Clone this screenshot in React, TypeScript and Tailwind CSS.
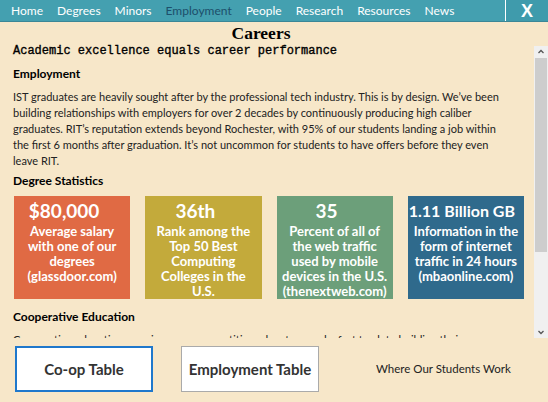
import React from "react";

const navItems = ["Home", "Degrees", "Minors", "Employment", "People", "Research", "Resources", "News"];

const paragraph = [
  "IST graduates are heavily sought after by the professional tech industry. This is by design. We’ve been",
  "building relationships with employers for over 2 decades by continuously producing high caliber",
  "graduates. RIT’s reputation extends beyond Rochester, with 95% of our students landing a job within",
  "the first 6 months after graduation. It’s not uncommon for students to have offers before they even",
  "leave RIT.",
];

interface Stat {
  value: string;
  text: string[];
  bg: string;
}

const stats: Stat[] = [
  { value: "$80,000", text: ["Average salary", "with one of our", "degrees", "(glassdoor.com)"], bg: "bg-[#e06a44]" },
  { value: "36th", text: ["Rank among the", "Top 50 Best", "Computing", "Colleges in the", "U.S."], bg: "bg-[#c3aa3b]" },
  { value: "35", text: ["Percent of all of", "the web traffic", "used by mobile", "devices in the U.S.", "(thenextweb.com)"], bg: "bg-[#6c9f7a]" },
  { value: "1.11 Billion GB", text: ["Information in the", "form of internet", "traffic in 24 hours", "(mbaonline.com)"], bg: "bg-[#2f6a8c]" },
];

const StatBox = ({ stat }: { stat: Stat }) => (
  <div className={`${stat.bg} w-[117px] h-[103px] pt-[2px] text-center text-white font-bold font-['Lato',sans-serif] whitespace-nowrap overflow-hidden`}>
    <div className={`${stat.value.length > 8 ? "text-[16px] pr-2" : "text-[19px] pr-4"} leading-[26px]`}>{stat.value}</div>
    {stat.text.map((line) => (
      <div key={line} className="text-[13px] leading-[15px]">{line}</div>
    ))}
  </div>
);

export default function App() {
  return (
    <div className="w-[548px] h-[402px] bg-[#f7e7c9] flex flex-col overflow-hidden font-['Lato',sans-serif] text-[#222]">
      <nav className="h-[22px] bg-[#44a0b0] border-b border-[#3a8797] flex items-stretch">
        <div className="flex-1 flex items-center gap-[14px] pl-[11px] text-[12px] text-white">
          {navItems.map((item) => (
            <span key={item} className={item === "Employment" ? "text-[#1d4f6b]" : ""}>
              {item}
            </span>
          ))}
        </div>
        <button className="w-[43px] bg-[#3f9bac] border-l border-white text-white font-bold text-[18px] leading-none font-['Liberation_Sans',sans-serif]">
          X
        </button>
      </nav>

      <h1 className="text-center text-[17.5px] font-bold font-['Liberation_Serif',serif] leading-[22px] text-black h-[22px] pr-[26px]">
        Careers
      </h1>

      <div className="h-[294px] flex">
        <div className="flex-1 overflow-hidden pl-[13px] pr-[10px]">
          <p className="font-['Liberation_Mono',monospace] text-[12px] leading-[14px] text-black [-webkit-text-stroke:0.35px_black]">
            Academic excellence equals career performance
          </p>
          <h2 className="text-[12px] font-bold mt-[7px] leading-[18px] text-black">Employment</h2>
          <p className="text-[11px] leading-[16px] mt-[6px] whitespace-nowrap">
            {paragraph.map((line) => (
              <span key={line} className="block">{line}</span>
            ))}
          </p>
          <h2 className="text-[12px] font-bold mt-[3px] leading-[18px] text-black">Degree Statistics</h2>
          <div className="flex gap-[15px] mt-[6px] ml-[1px]">
            {stats.map((s) => (
              <StatBox key={s.value} stat={s} />
            ))}
          </div>
          <h2 className="text-[12px] font-bold mt-[9px] leading-[18px] text-black">Cooperative Education</h2>
          <p className="text-[11px] leading-[16px] mt-[6px] whitespace-nowrap">
            Cooperative education can give you a competitive advantage and a fast track to building their career.
          </p>
        </div>
        <div className="w-[14px] pt-[2px] flex flex-col">
          <div className="flex-1 bg-[#f0f0f0] flex flex-col items-center">
            <svg width="14" height="12" viewBox="0 0 14 12">
              <path d="M4.5 7 L7 4.5 L9.5 7" fill="none" stroke="#555" strokeWidth="1.3" />
            </svg>
            <div className="w-[12px] h-[194px] bg-[#cdcdcd]" />
            <div className="flex-1" />
            <svg width="14" height="12" viewBox="0 0 14 12">
              <path d="M4.5 5 L7 7.5 L9.5 5" fill="none" stroke="#555" strokeWidth="1.3" />
            </svg>
          </div>
        </div>
      </div>

      <div className="flex items-center pl-[15px] pt-[8px]">
        <button className="w-[138px] h-[46px] shrink-0 bg-white border-2 border-[#1f78cc] text-[15px] font-bold text-[#333]">
          Co-op Table
        </button>
        <button className="ml-[28px] w-[138px] h-[46px] shrink-0 bg-white border border-[#aaa] text-[15px] font-bold text-[#333]">
          Employment Table
        </button>
        <span className="ml-[57px] text-[11.5px] text-[#222] whitespace-nowrap">Where Our Students Work</span>
      </div>
    </div>
  );
}
